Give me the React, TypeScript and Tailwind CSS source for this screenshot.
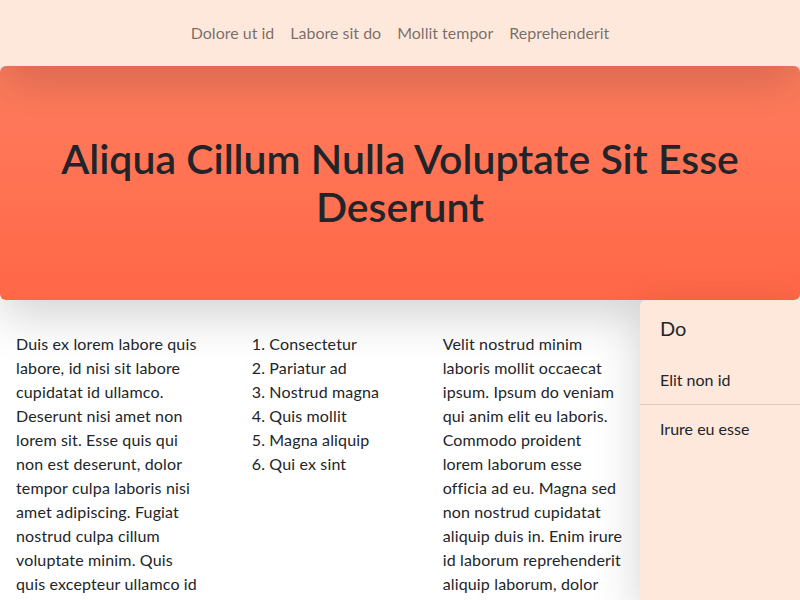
import React from "react";

export default function App() {
  return (
    <div className="min-h-[600px] bg-white text-[#212529] text-base leading-6 font-['Lato',sans-serif]">
      <nav className="relative z-10 bg-[#fee8dc] h-[66px] flex items-center justify-center shadow-[0_1rem_3rem_rgba(0,0,0,0.175)]">
        <ul className="flex">
          {["Dolore ut id", "Labore sit do", "Mollit tempor", "Reprehenderit"].map((t) => (
            <li key={t}>
              <a className="block px-2 py-2 text-[rgba(0,0,0,0.55)]">{t}</a>
            </li>
          ))}
        </ul>
      </nav>
      <header className="h-[234px] rounded-md bg-gradient-to-b from-[#ff7d5e] to-[#ff6747] flex items-center justify-center shadow-[0_1rem_3rem_rgba(0,0,0,0.175)] px-12">
        <h1 className="text-[41px] leading-[48px] font-semibold text-center text-[#212529]">
          Aliqua Cillum Nulla Voluptate Sit Esse Deserunt
        </h1>
      </header>
      <div className="flex">
        <main className="flex-1 grid grid-cols-3 gap-8 px-4 pt-8 tracking-[0.15px]">
          <p>
            Duis ex lorem labore quis labore, id nisi sit labore cupidatat id ullamco. Deserunt nisi amet non lorem sit. Esse quis qui non est deserunt, dolor tempor culpa laboris nisi amet adipiscing. Fugiat nostrud culpa cillum voluptate minim. Quis quis excepteur ullamco id
          </p>
          <ol className="list-decimal pl-10">
            <li>Consectetur</li>
            <li>Pariatur ad</li>
            <li>Nostrud magna</li>
            <li>Quis mollit</li>
            <li>Magna aliquip</li>
            <li>Qui ex sint</li>
          </ol>
          <p>
            Velit nostrud minim laboris mollit occaecat ipsum. Ipsum do veniam qui anim elit eu laboris. Commodo proident lorem laborum esse officia ad eu. Magna sed non nostrud cupidatat aliquip duis in. Enim irure id laborum reprehenderit aliquip laborum, dolor
          </p>
        </main>
        <aside className="w-[160px] min-h-[300px] bg-[#fee8dc] rounded-tl-md shadow-[0_1rem_3rem_rgba(0,0,0,0.175)]">
          <div className="px-5 py-4 text-xl leading-6">Do</div>
          <ul>
            <li className="px-5 py-3 border-b border-[#d8c9c1]">Elit non id</li>
            <li className="px-5 py-3">Irure eu esse</li>
          </ul>
        </aside>
      </div>
    </div>
  );
}
